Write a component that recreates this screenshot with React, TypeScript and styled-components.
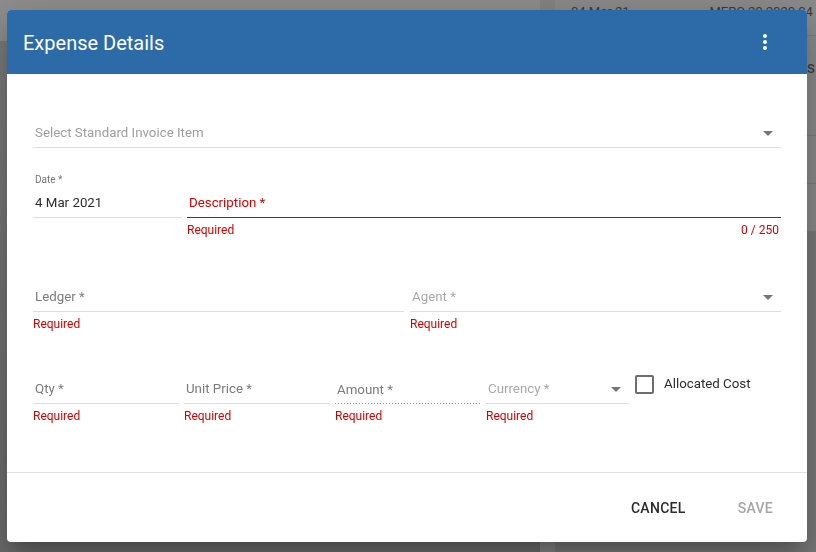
import styled, { createGlobalStyle } from 'styled-components';

const GlobalStyle = createGlobalStyle`
  html, body {
    margin: 0;
    padding: 0;
    width: 816px;
    height: 552px;
    overflow: hidden;
    font-family: Roboto, "Liberation Sans", sans-serif;
  }
`;

const RED = '#d50000';

type Tone = 'normal' | 'error' | 'dotted';

const lineFor = (tone: Tone) => {
  if (tone === 'error') return `border-bottom: 1px solid ${RED};`;
  if (tone === 'dotted')
    return 'background: linear-gradient(to right, #8f8f8f 34%, transparent 0) left bottom / 3px 1px repeat-x;';
  return 'border-bottom: 1px solid #dedede;';
};

const ArrowDown = ({ color = '#757575' }: { color?: string }) => (
  <svg width="24" height="24" viewBox="0 0 24 24">
    <path d="M7 10l5 5 5-5z" fill={color} />
  </svg>
);

const MoreVert = () => (
  <svg width="24" height="24" viewBox="0 0 24 24">
    <path
      fill="#fff"
      d="M12 8c1.1 0 2-.9 2-2s-.9-2-2-2-2 .9-2 2 .9 2 2 2zm0 2c-1.1 0-2 .9-2 2s.9 2 2 2 2-.9 2-2-.9-2-2-2zm0 6c-1.1 0-2 .9-2 2s.9 2 2 2 2-.9 2-2-.9-2-2-2z"
    />
  </svg>
);

const App = () => {
  return (
    <>
      <GlobalStyle />
      <Page>
        <LeftPane>
          <LeftTop />
          <LeftRest />
        </LeftPane>
        <ScrollStripe />
        <RightPane>
          <TopRow>
            <span>04 Mar 21</span>
            <span>MERC 20 2020 04</span>
          </TopRow>
          <BgRow $h={100}>ns</BgRow>
          <BgRow $h={48} />
          <BgRow $h={48} />
          <RightRest />
        </RightPane>
      </Page>

      <Overlay>
        <Dialog>
          <Header>
            <Title>Expense Details</Title>
            <MenuButton>
              <MoreVert />
            </MenuButton>
          </Header>

          <Body>
            <Row>
              <Field $flex="1">
                <InputBox $tone="normal" $h={33}>
                  <Placeholder $color="#9e9e9e">Select Standard Invoice Item</Placeholder>
                  <ArrowSlot>
                    <ArrowDown />
                  </ArrowSlot>
                </InputBox>
              </Field>
            </Row>

            <Row $top={25} $gap={5}>
              <Field $w={149}>
                <InputBox $tone="normal" $h={45} $stack>
                  <SmallLabel>Date *</SmallLabel>
                  <Value>4 Mar 2021</Value>
                </InputBox>
              </Field>
              <Field $flex="1">
                <InputBox $tone="error" $h={45}>
                  <Placeholder $color={RED}>Description *</Placeholder>
                </InputBox>
                <HelperRow>
                  <Helper>Required</Helper>
                  <Helper>0 / 250</Helper>
                </HelperRow>
              </Field>
            </Row>

            <Row $top={42} $gap={6}>
              <Field $flex="1">
                <InputBox $tone="normal" $h={33}>
                  <Placeholder $color="#7b7b7b">Ledger *</Placeholder>
                </InputBox>
                <Helper>Required</Helper>
              </Field>
              <Field $flex="1">
                <InputBox $tone="normal" $h={33}>
                  <Placeholder $color="#a8a8a8">Agent *</Placeholder>
                  <ArrowSlot>
                    <ArrowDown />
                  </ArrowSlot>
                </InputBox>
                <Helper>Required</Helper>
              </Field>
            </Row>

            <Row $top={40} $gap={5}>
              <Field $w={146}>
                <InputBox $tone="normal" $h={33}>
                  <Placeholder $color="#7b7b7b">Qty *</Placeholder>
                </InputBox>
                <Helper>Required</Helper>
              </Field>
              <Field $w={146}>
                <InputBox $tone="normal" $h={33}>
                  <Placeholder $color="#7b7b7b">Unit Price *</Placeholder>
                </InputBox>
                <Helper>Required</Helper>
              </Field>
              <Field $w={146}>
                <InputBox $tone="dotted" $h={33}>
                  <Placeholder $color="#7b7b7b">Amount *</Placeholder>
                </InputBox>
                <Helper>Required</Helper>
              </Field>
              <Field $w={143}>
                <InputBox $tone="normal" $h={33}>
                  <Placeholder $color="#a8a8a8">Currency *</Placeholder>
                  <ArrowSlot>
                    <ArrowDown />
                  </ArrowSlot>
                </InputBox>
                <Helper>Required</Helper>
              </Field>
              <CheckGroup>
                <CheckBox />
                <CheckText>Allocated Cost</CheckText>
              </CheckGroup>
            </Row>
          </Body>

          <Footer>
            <ActionButton>CANCEL</ActionButton>
            <ActionButton $disabled>SAVE</ActionButton>
          </Footer>
        </Dialog>
      </Overlay>
    </>
  );
};

export default App;

// background page (dimmed, behind the dialog)
const Page = styled.div`
  width: 816px;
  height: 552px;
  display: flex;
  background: #777;
`;

const LeftPane = styled.div`
  width: 540px;
  display: flex;
  flex-direction: column;
`;

const LeftTop = styled.div`
  height: 41px;
  background: #8e8e8e;
  border-bottom: 1px solid #7a7a7a;
`;

const LeftRest = styled.div`
  flex: 1;
  background: linear-gradient(#7b7b7b, #6c6c6c);
`;

const ScrollStripe = styled.div`
  width: 15px;
  background: #848484;
`;

const RightPane = styled.div`
  flex: 1;
  display: flex;
  flex-direction: column;
  background: #8b8b8b;
`;

const TopRow = styled.div`
  height: 36px;
  display: flex;
  gap: 80px;
  padding: 4px 0 0 16px;
  box-sizing: border-box;
  font-size: 13px;
  color: #3a3a3a;
  border-bottom: 1px solid #7a7a7a;
  white-space: nowrap;
  overflow: hidden;
`;

const BgRow = styled.div<{ $h: number }>`
  height: ${(p) => p.$h}px;
  box-sizing: border-box;
  border-bottom: 1px solid #7c7c7c;
  font-size: 16px;
  color: #3a3a3a;
  padding: 22px 0 0 243px;
  white-space: nowrap;
`;

const RightRest = styled.div`
  flex: 1;
  background: #797979;
`;

// dialog
const Overlay = styled.div`
  position: fixed;
  inset: 0;
  padding: 10px 9px 10px 7px;
  display: flex;
`;

const Dialog = styled.div`
  flex: 1;
  display: flex;
  flex-direction: column;
  background: #fff;
  border-radius: 4px;
  overflow: hidden;
  box-shadow: 0px 11px 15px -7px rgba(0, 0, 0, 0.2),
    0px 24px 38px 3px rgba(0, 0, 0, 0.14), 0px 9px 46px 8px rgba(0, 0, 0, 0.12);
`;

const Header = styled.div`
  height: 64px;
  flex-shrink: 0;
  display: flex;
  align-items: center;
  justify-content: space-between;
  padding: 0 30px 0 16px;
  background: #2d6ba8;
`;

const Title = styled.h2`
  margin: 0;
  font-size: 20px;
  font-weight: 400;
  color: #fff;
  line-height: 24px;
  padding-top: 1px;
`;

const MenuButton = styled.div`
  width: 24px;
  height: 24px;
  display: flex;
`;

const Body = styled.div`
  flex: 1;
  display: flex;
  flex-direction: column;
  padding: 41px 26px 0;
`;

const Row = styled.div<{ $top?: number; $gap?: number }>`
  display: flex;
  align-items: flex-start;
  margin-top: ${(p) => p.$top ?? 0}px;
  gap: ${(p) => p.$gap ?? 0}px;
`;

const Field = styled.div<{ $flex?: string; $w?: number }>`
  display: flex;
  flex-direction: column;
  flex: ${(p) => (p.$w ? `0 0 ${p.$w}px` : p.$flex)};
  min-width: 0;
`;

const InputBox = styled.div<{ $tone: Tone; $h: number; $stack?: boolean }>`
  height: ${(p) => p.$h}px;
  box-sizing: border-box;
  display: flex;
  flex-direction: ${(p) => (p.$stack ? 'column' : 'row')};
  justify-content: space-between;
  align-items: ${(p) => (p.$stack ? 'stretch' : 'flex-end')};
  padding: 0 0 6px 2px;
  ${(p) => lineFor(p.$tone)}
`;

const Placeholder = styled.span<{ $color: string }>`
  font-size: 13.3px;
  line-height: 16px;
  color: ${(p) => p.$color};
  white-space: nowrap;
`;

const SmallLabel = styled.span`
  font-size: 10px;
  line-height: 12px;
  color: #757575;
  padding-top: 1px;
`;

const Value = styled.span`
  font-size: 13.3px;
  line-height: 16px;
  color: #2b2b2b;
`;

const ArrowSlot = styled.span`
  display: flex;
  margin: 0 1px -4px 0;
`;

const HelperRow = styled.div`
  display: flex;
  justify-content: space-between;
  padding-right: 2px;
`;

const Helper = styled.span`
  margin-top: 5px;
  font-size: 12px;
  line-height: 14px;
  color: ${RED};
`;

const CheckGroup = styled.div`
  display: flex;
  align-items: flex-start;
  gap: 10px;
  margin-top: 4px;
  padding-left: 1px;
`;

const CheckBox = styled.span`
  width: 19px;
  height: 19px;
  box-sizing: border-box;
  border: 2px solid #6e6e6e;
  border-radius: 2px;
`;

const CheckText = styled.span`
  font-size: 13.3px;
  line-height: 16px;
  margin-top: 1px;
  color: #2b2b2b;
`;

const Footer = styled.div`
  height: 70px;
  flex-shrink: 0;
  box-sizing: border-box;
  border-top: 1px solid #e0e0e0;
  display: flex;
  align-items: center;
  justify-content: flex-end;
  gap: 20px;
  padding: 0 18px 0 0;
`;

const ActionButton = styled.button<{ $disabled?: boolean }>`
  border: none;
  background: none;
  padding: 0 16px;
  height: 36px;
  font-family: Roboto, "Liberation Sans", sans-serif;
  font-size: 14px;
  font-weight: 500;
  letter-spacing: 0.3px;
  color: ${(p) => (p.$disabled ? '#a6a6a6' : '#2b2b2b')};
  cursor: ${(p) => (p.$disabled ? 'default' : 'pointer')};
`;
